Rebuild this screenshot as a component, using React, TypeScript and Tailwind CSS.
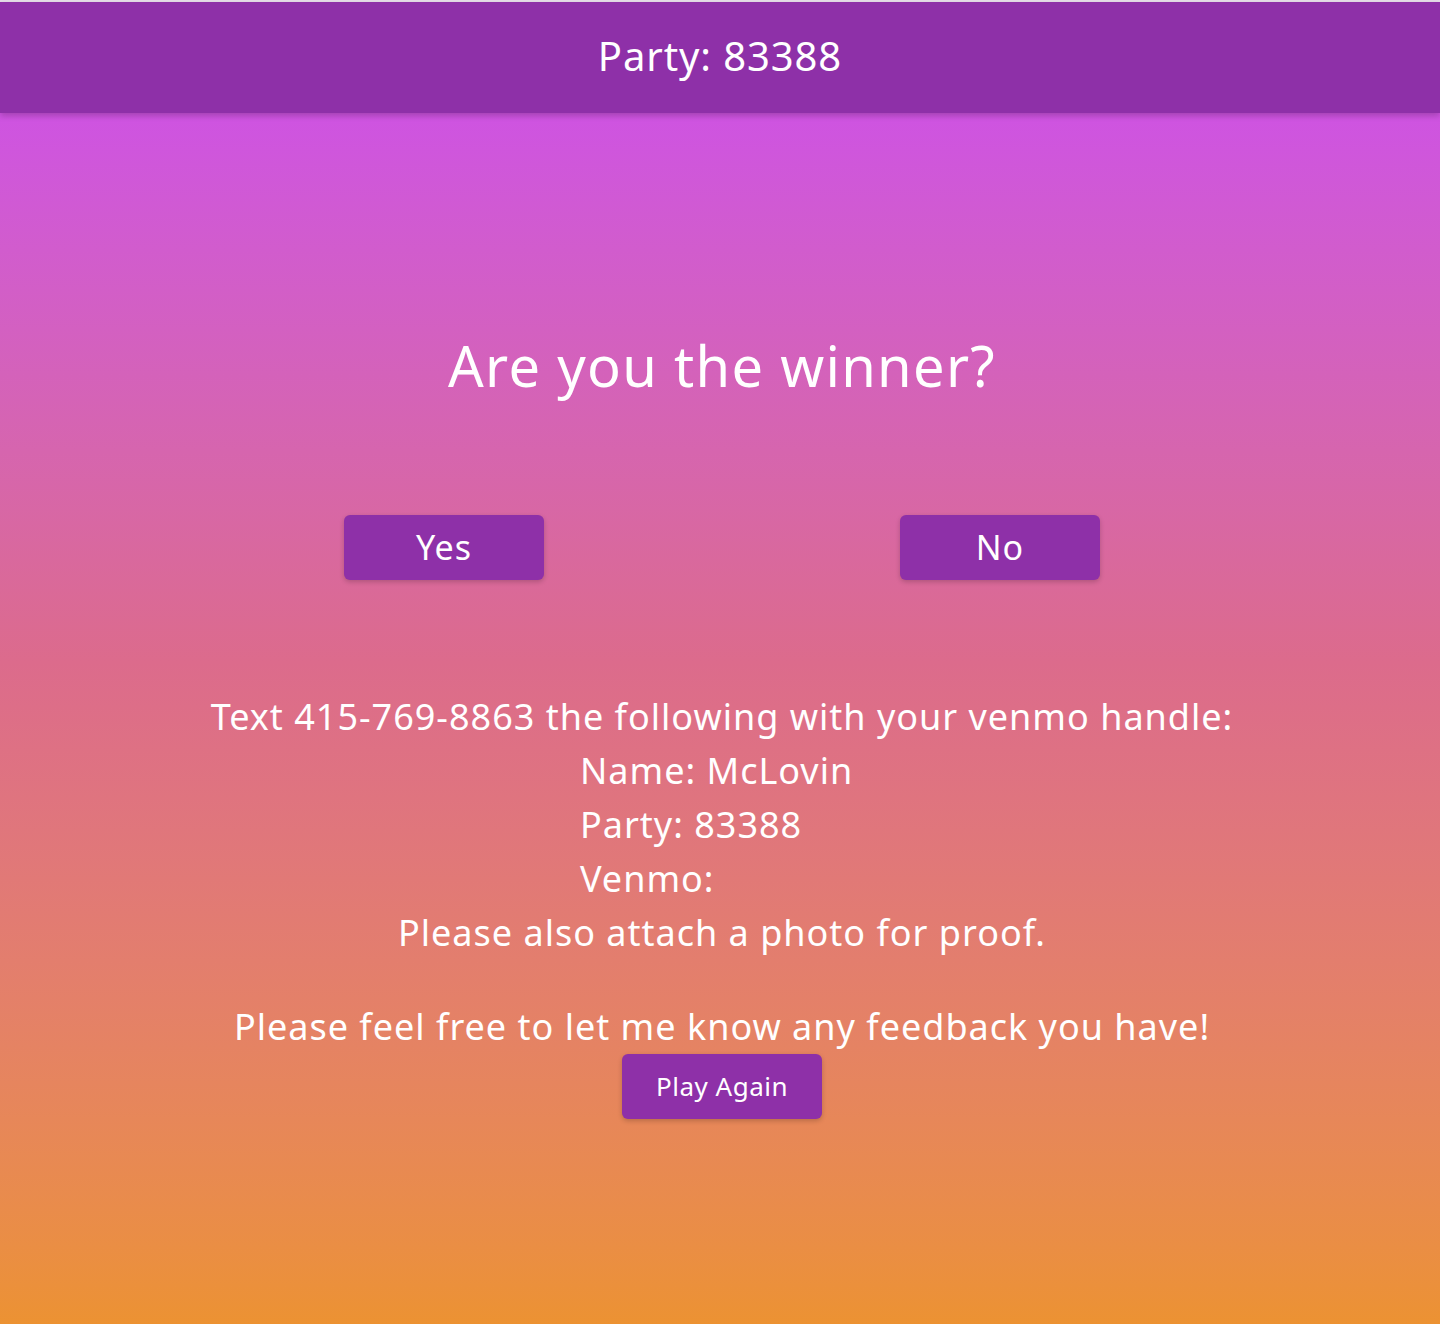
export default function App() {
  return (
    <div
      className="min-h-[1324px] bg-gradient-to-b from-[#cc4af2] via-[#dc6b8c] to-[#ec9232] text-white"
      style={{ fontFamily: '"Noto Sans", "Open Sans", sans-serif' }}
    >
      <div className="h-[2px] bg-[#e6dde9]" />
      {/* Header */}
      <header className="h-[111px] pb-[4px] bg-[#8e30a8] flex items-center justify-center shadow-[0_3px_6px_rgba(0,0,0,0.2)]">
        <h1 className="text-[40px] tracking-[0.9px] leading-none">Party: 83388</h1>
      </header>

      <main className="flex flex-col items-center pl-[4px]">
        <h2 className="mt-[210px] text-[56px] tracking-[1.3px] leading-[84px]">Are you the winner?</h2>

        <div className="mt-[108px] flex justify-center gap-[356px]">
          <button className="w-[200px] h-[65px] rounded-md bg-[#8e30a8] text-[34px] tracking-[1px] shadow-[0_2px_5px_rgba(0,0,0,0.2)]">
            Yes
          </button>
          <button className="w-[200px] h-[65px] rounded-md bg-[#8e30a8] text-[34px] tracking-[1px] shadow-[0_2px_5px_rgba(0,0,0,0.2)]">
            No
          </button>
        </div>

        <div className="mt-[110px] flex flex-col items-center text-[36px] tracking-[1px] leading-[54px]">
          <p>Text 415-769-8863 the following with your venmo handle:</p>
          <div className="w-[284px] text-left">
            <p>Name: McLovin</p>
            <p>Party: 83388</p>
            <p>Venmo:</p>
          </div>
          <p>Please also attach a photo for proof.</p>
          <p className="mt-[40px]">Please feel free to let me know any feedback you have!</p>
        </div>

        <button className="w-[200px] h-[65px] rounded-md bg-[#8e30a8] text-[26px] tracking-[0.5px] shadow-[0_2px_5px_rgba(0,0,0,0.2)]">
          Play Again
        </button>
      </main>
    </div>
  );
}
